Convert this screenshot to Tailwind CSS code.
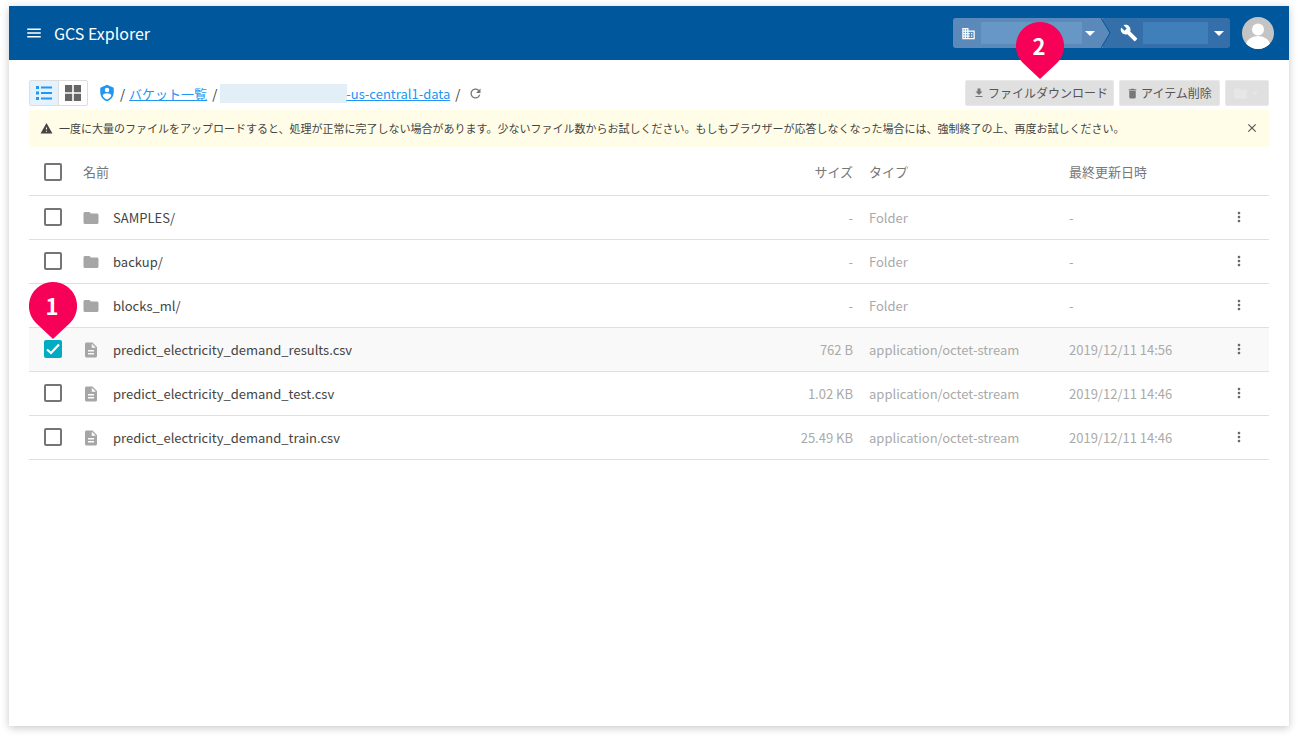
<!DOCTYPE html>
<html lang="ja">
<head>
    <meta charset="UTF-8">
    <title>GCS Explorer</title>
    <script src="https://cdn.jsdelivr.net/npm/@tailwindcss/browser@4"></script>
</head>
<body class="bg-white h-[738px] overflow-hidden pt-[6px] px-[9px] font-['Noto_Sans_CJK_JP','Noto_Sans',sans-serif]">
    <div class="relative h-[720px] w-[1280px] bg-white shadow-[0_2px_8px_rgba(0,0,0,0.22)]">

        <!-- App bar -->
        <header class="h-[54px] bg-[#01579b] flex items-center text-white pl-4 pr-[15px]">
            <svg class="w-[18px] h-[18px] mr-[11px]" viewBox="0 0 24 24" fill="currentColor"><path d="M3 18h18v-2H3v2zm0-5h18v-2H3v2zm0-7v2h18V6H3z"/></svg>
            <span class="text-[16px] leading-none">GCS Explorer</span>
            <div class="ml-auto flex items-center h-[30px] rounded-[3px] bg-[#356fa9] text-white relative">
                <!-- project -->
                <div class="w-[150px] h-full flex items-center pl-[8px] bg-[#5b8aba] rounded-l-[3px]">
                    <svg class="w-[15px] h-[15px]" viewBox="0 0 24 24" fill="currentColor"><path d="M12 7V3H2v18h20V7H12zM6 19H4v-2h2v2zm0-4H4v-2h2v2zm0-4H4V9h2v2zm0-4H4V5h2v2zm4 12H8v-2h2v2zm0-4H8v-2h2v2zm0-4H8V9h2v2zm0-4H8V5h2v2zm10 12h-8v-2h2v-2h-2v-2h2v-2h-2V9h8v10zm-2-8h-2v2h2v-2zm0 4h-2v2h2v-2z"/></svg>
                    <div class="w-[101px] h-[22px] ml-[5px] bg-[#6797c5]"></div>
                    <span class="ml-[3px] w-0 h-0 border-x-[5px] border-x-transparent border-t-[5px] border-t-white"></span>
                </div>
                <svg class="absolute left-[148px] top-0 w-[10px] h-[30px] z-10" viewBox="0 0 10 30"><path d="M0 0 L9 15 L0 30 Z" fill="#5b8aba"/><path d="M0 0 L9 15 L0 30" fill="none" stroke="#01579b" stroke-width="1"/></svg>
                <!-- role -->
                <div class="w-[127px] h-full flex items-center pl-[17px]">
                    <svg class="w-[18px] h-[18px]" viewBox="0 0 24 24" fill="currentColor"><path d="M22.7 19l-9.1-9.1c.9-2.3.4-5-1.5-6.9-2-2-5-2.4-7.4-1.3L9 6 6 9 1.600 4.700C.4 7.100.9 10.100 2.900 12.100c1.900 1.900 4.600 2.400 6.900 1.500l9.100 9.100c.4.400 1 .4 1.400 0l2.300-2.300c.5-.4.5-1.100.1-1.400z"/></svg>
                    <div class="w-[65px] h-[22px] ml-[5px] bg-[#4080ba]"></div>
                    <span class="ml-[6px] w-0 h-0 border-x-[5px] border-x-transparent border-t-[5px] border-t-white"></span>
                </div>
            </div>
            <div class="ml-[12px] w-[32px] h-[32px] rounded-full bg-[#c4c4c4] overflow-hidden">
                <svg viewBox="0 0 32 32" class="w-full h-full"><circle cx="16" cy="12.500" r="6" fill="#fff"/><ellipse cx="16" cy="28" rx="12" ry="9" fill="#fff"/></svg>
            </div>
        </header>

        <main class="px-5">
            <!-- Toolbar -->
            <div class="h-[26px] mt-5 flex items-center">
                <div class="flex h-[26px] w-[59px] border border-[#ddd] rounded-[2px]">
                    <div class="w-[29px] bg-[#e3f2fd] flex items-center justify-center border-r border-[#ddd]">
                        <svg class="w-[16px] h-[14px] text-[#2196f3]" viewBox="0 0 16 14" fill="currentColor"><path d="M0 0h3v3H0zM5 .5h11v2H5zM0 5.500h3v3H0zM5 6h11v2H5zM0 11h3v3H0zM5 11.500h11v2H5z"/></svg>
                    </div>
                    <div class="flex-1 flex items-center justify-center">
                        <svg class="w-[16px] h-[16px] text-[#666]" viewBox="0 0 16 16" fill="currentColor"><path d="M0 0h7.200v7.200H0zM8.800 0H16v7.200H8.800zM0 8.800h7.200V16H0zM8.800 8.800H16V16H8.800z"/></svg>
                    </div>
                </div>
                <svg class="w-[18px] h-[18px] ml-[10px] text-[#2196f3]" viewBox="0 0 24 24" fill="currentColor"><path d="M12 1L3 5v6c0 5.550 3.840 10.740 9 12 5.160-1.260 9-6.450 9-12V5l-9-4zm0 3.900a3 3 0 1 1 0 6 3 3 0 0 1 0-6zm0 15.800c-2.600-.800-4.800-2.900-5.800-5.500.1-1.900 3.900-3 5.800-3s5.700 1.100 5.800 3c-1 2.600-3.200 4.700-5.800 5.500z"/></svg>
                <div class="ml-[4px] flex items-center text-[13px] leading-none text-[#333]">
                    <span>/</span>
                    <a class="ml-[4px] text-[#2196f3] underline">バケット一覧</a>
                    <span class="ml-[5px]">/</span>
                    <div class="ml-[3px] w-[127px] h-[19px] bg-[#e2eff7]"></div>
                    <a class="-ml-px text-[#2196f3] underline">-us-central1-data</a>
                    <span class="ml-[5px]">/</span>
                    <svg class="w-[15px] h-[15px] ml-[8px] text-[#777]" viewBox="0 0 24 24" fill="currentColor"><path d="M17.650 6.350A7.958 7.958 0 0 0 12 4c-4.420 0-7.990 3.580-7.990 8s3.570 8 7.990 8c3.730 0 6.840-2.550 7.730-6h-2.080A5.990 5.990 0 0 1 12 18c-3.310 0-6-2.690-6-6s2.690-6 6-6c1.660 0 3.140.690 4.220 1.780L13 11h7V4l-2.350 2.350z"/></svg>
                </div>
                <div class="ml-auto flex items-center gap-[5px] text-[12px] text-[#555]">
                    <div class="h-[26px] w-[149px] bg-[#e0e0e0] border border-[#e8e8e8] rounded-[2px] flex items-center pl-[7px]">
                        <svg class="w-[12px] h-[12px] text-[#777] mr-[3px]" viewBox="0 0 24 24" fill="currentColor"><path d="M19 9h-4V3H9v6H5l7 7 7-7zM5 18v2h14v-2H5z"/></svg>
                        <span class="whitespace-nowrap">ファイルダウンロード</span>
                    </div>
                    <div class="h-[26px] w-[101px] bg-[#e0e0e0] border border-[#e8e8e8] rounded-[2px] flex items-center pl-[6px]">
                        <svg class="w-[13px] h-[13px] text-[#777] mr-[2px]" viewBox="0 0 24 24" fill="currentColor"><path d="M6 19c0 1.100.9 2 2 2h8c1.100 0 2-.9 2-2V7H6v12zM19 4h-3.500l-1-1h-5l-1 1H5v2h14V4z"/></svg>
                        <span class="whitespace-nowrap">アイテム削除</span>
                    </div>
                    <div class="h-[26px] w-[44px] bg-[#e0e0e0] border border-[#e8e8e8] rounded-[2px] flex items-center pl-[7px]">
                        <svg class="w-[15px] h-[15px] text-[#e7e7e7]" viewBox="0 0 24 24" fill="currentColor"><path d="M20 6h-8l-2-2H4c-1.100 0-2 .9-2 2v12c0 1.100.9 2 2 2h16c1.100 0 2-.9 2-2V8c0-1.100-.9-2-2-2z"/></svg>
                        <span class="ml-[4px] w-0 h-0 border-x-[3px] border-x-transparent border-t-[3px] border-t-[#e7e7e7]"></span>
                    </div>
                </div>
            </div>

            <!-- Notice -->
            <div class="mt-[4px] h-[37px] bg-[#fffde7] flex items-center pl-[11px] pr-[10px] text-[11px] text-[#444]">
                <svg class="w-[13px] h-[13px] text-[#444] mr-[6px]" viewBox="0 0 24 24" fill="currentColor"><path d="M1 21h22L12 2 1 21zm12-3h-2v-2h2v2zm0-4h-2v-4h2v4z"/></svg>
                <span class="whitespace-nowrap">一度に大量のファイルをアップロードすると、処理が正常に完了しない場合があります。少ないファイル数からお試しください。もしもブラウザーが応答しなくなった場合には、強制終了の上、再度お試しください。</span>
                <svg class="w-[14px] h-[14px] ml-auto mb-[2px] text-[#555]" viewBox="0 0 24 24" fill="currentColor"><path d="M19 6.410 17.590 5 12 10.590 6.410 5 5 6.410 10.590 12 5 17.590 6.410 19 12 13.410 17.590 19 19 17.590 13.410 12z"/></svg>
            </div>

            <!-- Table head -->
            <div class="mt-[2px] h-[47px] grid grid-cols-[54px_670px_116px_200px_150px_40px] items-center border-b border-[#e0e0e0] text-[13px] text-[#777]">
                <div class="flex justify-center w-[48px]"><span class="w-[18px] h-[18px] border-2 border-[#757575] rounded-[2px] block"></span></div>
                <div>名前</div>
                <div class="text-right pr-4">サイズ</div>
                <div>タイプ</div>
                <div>最終更新日時</div>
                <div></div>
            </div>

            <!-- Rows -->
            <div class="h-[44px] grid grid-cols-[54px_670px_116px_200px_150px_40px] items-center border-b border-[#e0e0e0] text-[13px]">
                <div class="flex justify-center w-[48px] pb-[2px]"><span class="w-[18px] h-[18px] border-2 border-[#757575] rounded-[2px] block"></span></div>
                <div class="flex items-center text-[#444]">
                    <svg class="w-[18px] h-[18px] -ml-px text-[#a6a6a6] mr-[13px]" viewBox="0 0 24 24" fill="currentColor"><path d="M10 4H4c-1.100 0-2 .9-2 2v12c0 1.100.9 2 2 2h16c1.100 0 2-.9 2-2V8c0-1.100-.9-2-2-2h-8l-2-2z"/></svg>
                    SAMPLES/
                </div>
                <div class="text-right pr-4 text-[#aaa]">-</div>
                <div class="text-[#aaa]">Folder</div>
                <div class="text-[#aaa]">-</div>
                <div class="flex justify-center text-[#666] pb-[2px]"><svg class="w-[16px] h-[16px]" viewBox="0 0 24 24" fill="currentColor"><path d="M12 8c1.100 0 2-.9 2-2s-.9-2-2-2-2 .9-2 2 .9 2 2 2zm0 2c-1.100 0-2 .9-2 2s.9 2 2 2 2-.9 2-2-.9-2-2-2zm0 6c-1.100 0-2 .9-2 2s.9 2 2 2 2-.9 2-2-.9-2-2-2z"/></svg></div>
            </div>
            <div class="h-[44px] grid grid-cols-[54px_670px_116px_200px_150px_40px] items-center border-b border-[#e0e0e0] text-[13px]">
                <div class="flex justify-center w-[48px] pb-[2px]"><span class="w-[18px] h-[18px] border-2 border-[#757575] rounded-[2px] block"></span></div>
                <div class="flex items-center text-[#444]">
                    <svg class="w-[18px] h-[18px] -ml-px text-[#a6a6a6] mr-[13px]" viewBox="0 0 24 24" fill="currentColor"><path d="M10 4H4c-1.100 0-2 .9-2 2v12c0 1.100.9 2 2 2h16c1.100 0 2-.9 2-2V8c0-1.100-.9-2-2-2h-8l-2-2z"/></svg>
                    backup/
                </div>
                <div class="text-right pr-4 text-[#aaa]">-</div>
                <div class="text-[#aaa]">Folder</div>
                <div class="text-[#aaa]">-</div>
                <div class="flex justify-center text-[#666] pb-[2px]"><svg class="w-[16px] h-[16px]" viewBox="0 0 24 24" fill="currentColor"><path d="M12 8c1.100 0 2-.9 2-2s-.9-2-2-2-2 .9-2 2 .9 2 2 2zm0 2c-1.100 0-2 .9-2 2s.9 2 2 2 2-.9 2-2-.9-2-2-2zm0 6c-1.100 0-2 .9-2 2s.9 2 2 2 2-.9 2-2-.9-2-2-2z"/></svg></div>
            </div>
            <div class="h-[44px] grid grid-cols-[54px_670px_116px_200px_150px_40px] items-center border-b border-[#e0e0e0] text-[13px]">
                <div class="flex justify-center w-[48px] pb-[2px]"><span class="w-[18px] h-[18px] border-2 border-[#757575] rounded-[2px] block"></span></div>
                <div class="flex items-center text-[#444]">
                    <svg class="w-[18px] h-[18px] -ml-px text-[#a6a6a6] mr-[13px]" viewBox="0 0 24 24" fill="currentColor"><path d="M10 4H4c-1.100 0-2 .9-2 2v12c0 1.100.9 2 2 2h16c1.100 0 2-.9 2-2V8c0-1.100-.9-2-2-2h-8l-2-2z"/></svg>
                    blocks_ml/
                </div>
                <div class="text-right pr-4 text-[#aaa]">-</div>
                <div class="text-[#aaa]">Folder</div>
                <div class="text-[#aaa]">-</div>
                <div class="flex justify-center text-[#666] pb-[2px]"><svg class="w-[16px] h-[16px]" viewBox="0 0 24 24" fill="currentColor"><path d="M12 8c1.100 0 2-.9 2-2s-.9-2-2-2-2 .9-2 2 .9 2 2 2zm0 2c-1.100 0-2 .9-2 2s.9 2 2 2 2-.9 2-2-.9-2-2-2zm0 6c-1.100 0-2 .9-2 2s.9 2 2 2 2-.9 2-2-.9-2-2-2z"/></svg></div>
            </div>
            <div class="h-[44px] grid grid-cols-[54px_670px_116px_200px_150px_40px] items-center border-b border-[#e0e0e0] text-[13px] bg-[#f9f9f9]">
                <div class="flex justify-center w-[48px] pb-[2px]">
                    <span class="w-[18px] h-[18px] bg-[#00acc1] rounded-[2px] flex items-center justify-center">
                        <svg class="w-[14px] h-[12px] text-white" viewBox="0 0 14 12" fill="none" stroke="currentColor" stroke-width="2.200"><path d="M1 6.500 L5 10 L13 1.500"/></svg>
                    </span>
                </div>
                <div class="flex items-center text-[#444]">
                    <svg class="w-[18px] h-[18px] -ml-px text-[#a6a6a6] mr-[13px]" viewBox="0 0 24 24" fill="currentColor"><path d="M14 2H6c-1.100 0-2 .9-2 2v16c0 1.100.9 2 2 2h12c1.100 0 2-.9 2-2V8l-6-6zm2 16H8v-2h8v2zm0-4H8v-2h8v2zm-3-5V3.500L18.500 9H13z"/></svg>
                    predict_electricity_demand_results.csv
                </div>
                <div class="text-right pr-4 text-[#aaa]">762 B</div>
                <div class="text-[#aaa]">application/octet-stream</div>
                <div class="text-[#aaa]">2019/12/11 14:56</div>
                <div class="flex justify-center text-[#666] pb-[2px]"><svg class="w-[16px] h-[16px]" viewBox="0 0 24 24" fill="currentColor"><path d="M12 8c1.100 0 2-.9 2-2s-.9-2-2-2-2 .9-2 2 .9 2 2 2zm0 2c-1.100 0-2 .9-2 2s.9 2 2 2 2-.9 2-2-.9-2-2-2zm0 6c-1.100 0-2 .9-2 2s.9 2 2 2 2-.9 2-2-.9-2-2-2z"/></svg></div>
            </div>
            <div class="h-[44px] grid grid-cols-[54px_670px_116px_200px_150px_40px] items-center border-b border-[#e0e0e0] text-[13px]">
                <div class="flex justify-center w-[48px] pb-[2px]"><span class="w-[18px] h-[18px] border-2 border-[#757575] rounded-[2px] block"></span></div>
                <div class="flex items-center text-[#444]">
                    <svg class="w-[18px] h-[18px] -ml-px text-[#a6a6a6] mr-[13px]" viewBox="0 0 24 24" fill="currentColor"><path d="M14 2H6c-1.100 0-2 .9-2 2v16c0 1.100.9 2 2 2h12c1.100 0 2-.9 2-2V8l-6-6zm2 16H8v-2h8v2zm0-4H8v-2h8v2zm-3-5V3.500L18.500 9H13z"/></svg>
                    predict_electricity_demand_test.csv
                </div>
                <div class="text-right pr-4 text-[#aaa]">1.02 KB</div>
                <div class="text-[#aaa]">application/octet-stream</div>
                <div class="text-[#aaa]">2019/12/11 14:46</div>
                <div class="flex justify-center text-[#666] pb-[2px]"><svg class="w-[16px] h-[16px]" viewBox="0 0 24 24" fill="currentColor"><path d="M12 8c1.100 0 2-.9 2-2s-.9-2-2-2-2 .9-2 2 .9 2 2 2zm0 2c-1.100 0-2 .9-2 2s.9 2 2 2 2-.9 2-2-.9-2-2-2zm0 6c-1.100 0-2 .9-2 2s.9 2 2 2 2-.9 2-2-.9-2-2-2z"/></svg></div>
            </div>
            <div class="h-[44px] grid grid-cols-[54px_670px_116px_200px_150px_40px] items-center border-b border-[#e0e0e0] text-[13px]">
                <div class="flex justify-center w-[48px] pb-[2px]"><span class="w-[18px] h-[18px] border-2 border-[#757575] rounded-[2px] block"></span></div>
                <div class="flex items-center text-[#444]">
                    <svg class="w-[18px] h-[18px] -ml-px text-[#a6a6a6] mr-[13px]" viewBox="0 0 24 24" fill="currentColor"><path d="M14 2H6c-1.100 0-2 .9-2 2v16c0 1.100.9 2 2 2h12c1.100 0 2-.9 2-2V8l-6-6zm2 16H8v-2h8v2zm0-4H8v-2h8v2zm-3-5V3.500L18.500 9H13z"/></svg>
                    predict_electricity_demand_train.csv
                </div>
                <div class="text-right pr-4 text-[#aaa]">25.49 KB</div>
                <div class="text-[#aaa]">application/octet-stream</div>
                <div class="text-[#aaa]">2019/12/11 14:46</div>
                <div class="flex justify-center text-[#666] pb-[2px]"><svg class="w-[16px] h-[16px]" viewBox="0 0 24 24" fill="currentColor"><path d="M12 8c1.100 0 2-.9 2-2s-.9-2-2-2-2 .9-2 2 .9 2 2 2zm0 2c-1.100 0-2 .9-2 2s.9 2 2 2 2-.9 2-2-.9-2-2-2zm0 6c-1.100 0-2 .9-2 2s.9 2 2 2 2-.9 2-2-.9-2-2-2z"/></svg></div>
            </div>
        </main>

        <!-- Callout pins -->
        <div class="absolute left-[20px] top-[276px] w-[48px] h-[58px]">
            <svg class="absolute inset-0" viewBox="0 0 48 58"><path d="M24 0a24 24 0 0 1 17 41L24 57 7 41A24 24 0 0 1 24 0z" fill="#f70057"/></svg>
            <span class="absolute inset-x-0 top-[6px] pr-[2px] text-center text-white text-[22px] leading-[34px] font-bold">1</span>
        </div>
        <div class="absolute left-[1007px] top-[16px] w-[48px] h-[58px]">
            <svg class="absolute inset-0" viewBox="0 0 48 58"><path d="M24 0a24 24 0 0 1 17 41L24 57 7 41A24 24 0 0 1 24 0z" fill="#f70057"/></svg>
            <span class="absolute inset-x-0 top-[6px] pr-[2px] text-center text-white text-[22px] leading-[34px] font-bold">2</span>
        </div>
    </div>
</body>
</html>
